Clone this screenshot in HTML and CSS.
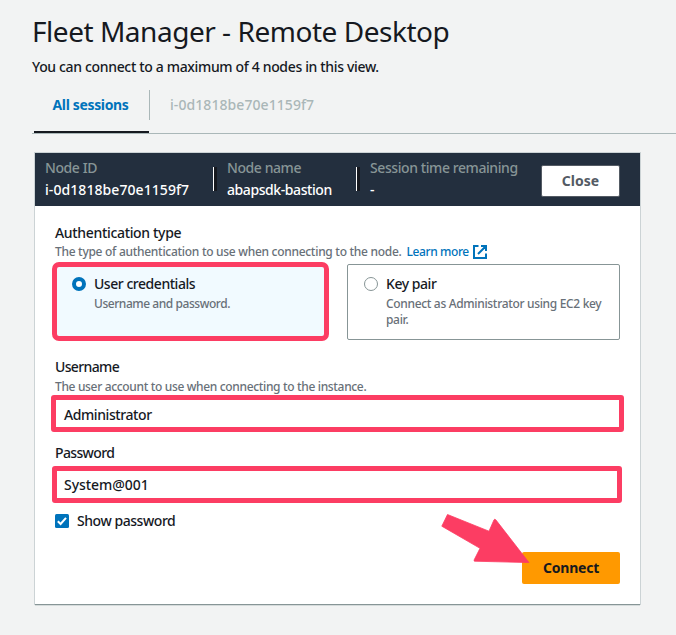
FILE: index.html
```html
<!DOCTYPE html>
<html lang="en">
<head>
<meta charset="utf-8">
<title>Fleet Manager - Remote Desktop</title>
<link rel="stylesheet" href="styles.css">
</head>
<body>
<header class="page-head">
  <h1 class="title"><span>Fleet Manager - Remote Desktop</span></h1>
  <p class="subtitle">You can connect to a maximum of 4 nodes in this view.</p>
</header>
<nav class="tabs">
  <a class="tab active">All sessions</a>
  <a class="tab disabled">i-0d1818be70e1159f7</a>
</nav>
<main class="card">
  <div class="card-head">
    <div class="meta meta-id"><span class="meta-label">Node ID</span><span class="meta-value code">i-0d1818be70e1159f7</span></div>
    <i class="rule"></i>
    <div class="meta meta-name"><span class="meta-label">Node name</span><span class="meta-value">abapsdk-bastion</span></div>
    <i class="rule"></i>
    <div class="meta"><span class="meta-label">Session time remaining</span><span class="meta-value">-</span></div>
    <button class="btn close">Close</button>
  </div>
  <form class="form">
    <div class="label">Authentication type</div>
    <div class="hint">The type of authentication to use when connecting to the node. <a class="link">Learn more</a><svg class="ext" width="14" height="14" viewBox="0 0 14 14" fill="none" stroke="#0073bb" stroke-width="2"><path d="M5.5 1H1v12h12V8.5M8 1h5v5M13 1L5 9"/></svg></div>
    <div class="tiles">
      <div class="tile selected">
        <i class="radio on"></i>
        <div><div class="tile-title">User credentials</div><div class="tile-text">Username and password.</div></div>
      </div>
      <div class="tile">
        <i class="radio"></i>
        <div><div class="tile-title">Key pair</div><div class="tile-text wide">Connect as Administrator using EC2 key pair.</div></div>
      </div>
    </div>
    <div class="label short">Username</div>
    <div class="hint user-hint">The user account to use when connecting to the instance.</div>
    <div class="field username">Administrator</div>
    <div class="label short">Password</div>
    <div class="field password">System@001</div>
    <div class="check-row">
      <svg class="check" width="14" height="14" viewBox="0 0 14 14"><rect width="14" height="14" rx="1.5" fill="#0073bb"/><path d="M2.8 7.3l2.8 2.7 5.4-6.2" fill="none" stroke="#fff" stroke-width="2"/></svg>
      <span>Show password</span>
    </div>
    <div class="actions"><button class="btn connect">Connect</button></div>
  </form>
  <svg class="arrow" width="90" height="50" viewBox="440 513 90 50"><path d="M441.8 526.2L447.5 514.5L489 531.2L494 519.8Q494.8 518.6 495.8 519.8L529 562.6L474.6 561.2Q473.6 561 474.2 559.8L480 548.3Z" fill="#fc3d63" stroke="#fc3d63" stroke-width=".8" stroke-linejoin="round"/></svg>
</main>
</body>
</html>
```

FILE: styles.css
```css
* { box-sizing: border-box; }
body {
  margin: 0;
  height: 635px;
  overflow: hidden;
  background: #f2f3f3;
  color: #16191f;
  font: 500 14px/22px "Noto Sans", "Open Sans", sans-serif;
  letter-spacing: -0.42px;
}
.page-head { padding: 13px 0 0 32px; }
.title { margin: 0; font-size: 28px; line-height: 36px; font-weight: 450; letter-spacing: -0.47px; white-space: nowrap; }
.subtitle { margin: 7px 0 0; letter-spacing: -0.34px; }
.tabs {
  display: flex;
  margin: 12px 0 0 32px;
  padding-left: 2px;
  height: 44px;
  border-bottom: 1px solid #aab7b8;
}
.tab { line-height: 30px; height: 30px; }
.active {
  width: 115px;
  height: 43px;
  padding-right: 2px;
  border-bottom: 2px solid #16191f;
  color: #0073bb;
  font-weight: 700;
  letter-spacing: -0.35px;
  text-align: center;
}
.disabled { padding-left: 20px; border-left: 1px solid #aab7b8; color: #aab7b8; letter-spacing: 0.07px; }
.card {
  position: relative;
  width: 605px;
  height: 451px;
  margin: 19px 0 0 35px;
  background: #fff;
  box-shadow: 0 1px 0 #879596, 0 0 0 1px #ccd3d5, 0 2px 0 #d5dbdb;
}
.card-head {
  display: flex;
  align-items: flex-start;
  height: 53px;
  padding: 4px 20px 0 10px;
  background: #232f3e;
  color: #fff;
}
.meta { display: flex; flex-direction: column; white-space: nowrap; }
.meta-id { width: 168px; }
.meta-name { width: 129px; }
.meta-label { color: #879596; }
.code { letter-spacing: 0.07px; }
.rule {
  width: 4px;
  height: 24px;
  margin: 10px 10px 0 0;
  background: #16191f;
  border-left: 1px solid #fff;
}
.btn { font: inherit; font-weight: 700; border-radius: 2px; padding: 0; height: 32px; }
.close {
  width: 79px;
  margin: 8px 0 0 auto;
  border: 1px solid #545b64;
  background: #fff;
  color: #545b64;
}
.form { padding: 16px 20px 0; }
.label { letter-spacing: -0.33px; }
.short { letter-spacing: -0.64px; }
.hint { display: flex; line-height: 16px; font-size: 12px; letter-spacing: -0.29px; color: #687078; white-space: nowrap; }
.user-hint { padding-top: 1px; letter-spacing: -0.34px; }
.link { margin-left: 5px; color: #0073bb; letter-spacing: -0.4px; }
.ext { margin: 1px 0 0 4px; }
.tiles { display: flex; gap: 18px; margin: 2px 0 15px -3px; align-items: center; }
.tile {
  display: flex;
  gap: 8px;
  width: 273px;
  height: 76px;
  padding: 8px 10px 0 16px;
  border: 1px solid #879596;
  border-radius: 2px;
}
.selected { width: 277px; height: 79px; padding: 6px 10px 0 15px; border: 5px solid #fc3d63; border-radius: 7px; background: #f1faff; }
.radio { flex: none; width: 14px; height: 14px; margin-top: 4px; border: 1px solid #879596; border-radius: 50%; background: #fff; }
.on { border: 4px solid #0073bb; }
.tile-title { letter-spacing: -0.46px; }
.tile-text { margin-top: 1px; font-size: 12px; line-height: 16px; letter-spacing: -0.45px; color: #687078; }
.wide { letter-spacing: -0.33px; }
.field {
  height: 37px;
  padding-left: 8px;
  line-height: 29px;
  border: 5px solid #fc3d63;
  border-radius: 3px;
}
.username { width: 573px; margin: 0 0 10px -4px; }
.password { width: 570px; margin: 2px 0 7px -3px; padding-left: 7px; line-height: 27px; letter-spacing: -0.04px; }
.check-row { display: flex; align-items: center; gap: 8px; letter-spacing: -0.45px; }
.actions { display: flex; justify-content: flex-end; margin-top: 20px; }
.connect { width: 98px; border: 0; background: #ff9900; color: #16191f; letter-spacing: -0.2px; }
.arrow { position: absolute; left: 405px; top: 360px; }
```
